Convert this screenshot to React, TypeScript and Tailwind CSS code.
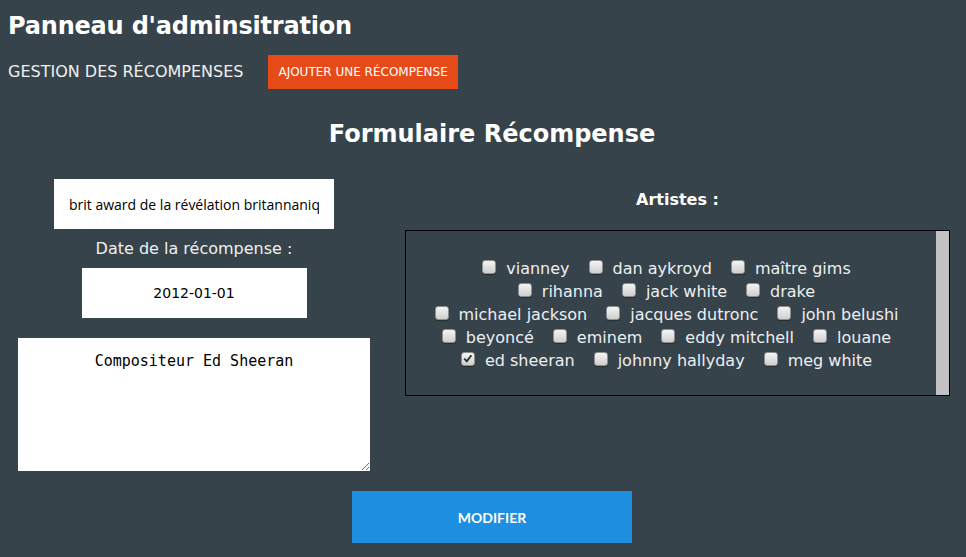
import React from "react";

const rows: { name: string; checked?: boolean }[][] = [
  [{ name: "vianney" }, { name: "dan aykroyd" }, { name: "maître gims" }],
  [{ name: "rihanna" }, { name: "jack white" }, { name: "drake" }],
  [{ name: "michael jackson" }, { name: "jacques dutronc" }, { name: "john belushi" }],
  [{ name: "beyoncé" }, { name: "eminem" }, { name: "eddy mitchell" }, { name: "louane" }],
  [{ name: "ed sheeran", checked: true }, { name: "johnny hallyday" }, { name: "meg white" }],
];

function Box({ checked }: { checked?: boolean }) {
  return (
    <span className="relative inline-block w-[14px] h-[14px] -translate-y-[2px] rounded-[3px] border border-[#8f8f8f] bg-gradient-to-b from-[#f4f4f4] to-[#cfcfcf] shadow-[0_1px_1px_rgba(0,0,0,0.35)]">
      {checked && (
        <svg viewBox="0 0 14 14" className="absolute left-0 top-0 w-[12px] h-[12px]">
          <path d="M2.6 6.6 L5.6 9.8 L11 2.6" fill="none" stroke="#2e2e2e" strokeWidth="2.2" />
        </svg>
      )}
    </span>
  );
}

export default function App() {
  return (
    <div className="min-h-[557px] bg-[#37434b] text-white font-['DejaVu_Sans',sans-serif] pb-[14px]">
      <h1 className="pt-[12px] pl-[8px] text-[24px] leading-7 font-bold tracking-[-0.2px]">Panneau d'adminsitration</h1>

      <div className="flex items-center mt-[15px] pl-[8px]">
        <span className="text-[16px] leading-6 text-[#eef0f1]">GESTION DES RÉCOMPENSES</span>
        <button className="ml-[25px] h-[34px] px-[10px] bg-[#e64a19] text-[12px] text-white">
          AJOUTER UNE RÉCOMPENSE
        </button>
      </div>

      <h2 className="ml-[18px] mt-[31px] text-center text-[24px] leading-7 font-bold">Formulaire Récompense</h2>

      <div className="flex ml-[18px] mt-[31px]">
        <div className="w-[352px] flex flex-col items-center">
          <input
            readOnly
            value="brit award de la révélation britannanique"
            className="w-[280px] h-[50px] px-[15px] bg-white text-black text-[14px] font-['Open_Sans',sans-serif] outline-none"
          />
          <label className="mt-[8px] text-[16px] leading-6 text-[#eef0f1]">Date de la récompense :</label>
          <div className="mt-[7px] w-[225px] h-[50px] bg-white text-black text-[14px] flex items-center justify-center">
            2012-01-01
          </div>
          <textarea
            readOnly
            defaultValue="Compositeur Ed Sheeran"
            className="mt-[20px] w-[352px] h-[133px] pt-[14px] bg-white text-black text-center text-[15px] leading-[18px] font-['DejaVu_Sans_Mono',monospace] outline-none"
          />
        </div>

        <div className="ml-[35px] w-[545px] flex flex-col items-center">
          <div className="mt-[9px] text-[16px] leading-6 font-bold">Artistes :</div>
          <div className="mt-[18px] w-[545px] h-[166px] border border-black flex">
            <div className="flex-1 pt-[26px] pr-[9px] flex flex-col">
              {rows.map((row, i) => (
                <div key={i} className="h-[23px] flex items-center justify-center gap-[19px]">
                  {row.map((a) => (
                    <label key={a.name} className="flex items-center text-[16px] text-[#eceff1]">
                      <Box checked={a.checked} />
                      <span className="ml-[10px]">{a.name}</span>
                    </label>
                  ))}
                </div>
              ))}
            </div>
            <div className="w-[13px] bg-[#c2c2c2]" />
          </div>
        </div>
      </div>

      <div className="ml-[18px] mt-[20px] flex justify-center">
        <button className="w-[280px] h-[52px] bg-[#1e8ee0] text-white text-[14px] font-bold font-['Lato',sans-serif]">
          MODIFIER
        </button>
      </div>
    </div>
  );
}
